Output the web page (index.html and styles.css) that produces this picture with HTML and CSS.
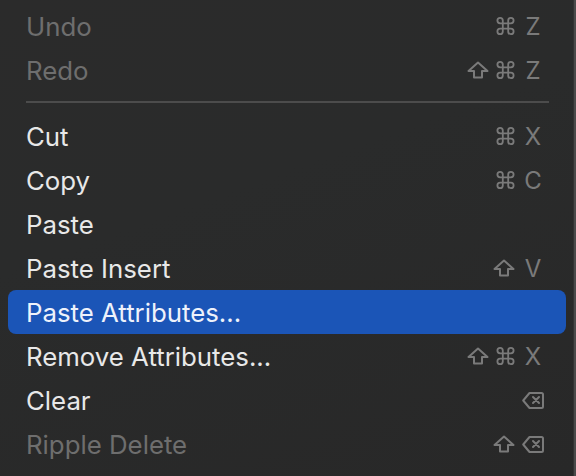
FILE: index.html
```html
<!DOCTYPE html>
<html>
<head>
<meta charset="utf-8">
<link rel="stylesheet" href="styles.css">
</head>
<body>
<svg width="0" height="0" class="defs">
  <defs>
    <symbol id="cmd" viewBox="2 2 20 20"><path d="M15 6v12a3 3 0 1 0 3-3H6a3 3 0 1 0 3 3V6a3 3 0 1 0-3 3h12a3 3 0 1 0-3-3" fill="none" stroke="currentColor" stroke-width="2" stroke-linejoin="round"/></symbol>
    <symbol id="shift" viewBox="0 0 22 18"><path d="M11 1.5 L20.5 10 H15 V16.5 H7 V10 H1.5 Z" fill="none" stroke="currentColor" stroke-width="2" stroke-linejoin="round"/></symbol>
    <symbol id="del" viewBox="0 0 22 17"><path d="M7.5 1 H19.5 A1.5 1.5 0 0 1 21 2.5 V14.5 A1.5 1.5 0 0 1 19.5 16 H7.5 L1.2 8.5 Z" fill="none" stroke="currentColor" stroke-width="2" stroke-linejoin="round"/><path d="M11 5 L17 11 M17 5 L11 11" stroke="currentColor" stroke-width="2" stroke-linecap="round"/></symbol>
  </defs>
</svg>
<div class="menu">
  <div class="item disabled"><span class="label">Undo</span><span class="keys"><svg class="ic cmd"><use href="#cmd"/></svg><span class="key">Z</span></span></div>
  <div class="item disabled"><span class="label">Redo</span><span class="keys"><svg class="ic shift"><use href="#shift"/></svg><svg class="ic cmd"><use href="#cmd"/></svg><span class="key">Z</span></span></div>
  <div class="sep"></div>
  <div class="item"><span class="label">Cut</span><span class="keys"><svg class="ic cmd"><use href="#cmd"/></svg><span class="key">X</span></span></div>
  <div class="item"><span class="label">Copy</span><span class="keys"><svg class="ic cmd"><use href="#cmd"/></svg><span class="key">C</span></span></div>
  <div class="item"><span class="label">Paste</span></div>
  <div class="item"><span class="label">Paste Insert</span><span class="keys"><svg class="ic shift"><use href="#shift"/></svg><span class="key">V</span></span></div>
  <div class="item selected"><span class="label">Paste Attributes...</span></div>
  <div class="item"><span class="label">Remove Attributes...</span><span class="keys"><svg class="ic shift"><use href="#shift"/></svg><svg class="ic cmd"><use href="#cmd"/></svg><span class="key">X</span></span></div>
  <div class="item"><span class="label">Clear</span><span class="keys"><svg class="ic del"><use href="#del"/></svg></span></div>
  <div class="item disabled"><span class="label">Ripple Delete</span><span class="keys"><svg class="ic shift"><use href="#shift"/></svg><svg class="ic del"><use href="#del"/></svg></span></div>
</div>
</body>
</html>
```

FILE: styles.css
```css
html, body {
  margin: 0;
  padding: 0;
  width: 576px;
  height: 476px;
  overflow: hidden;
  background: #282828;
}
.defs { position: absolute; }
.menu {
  box-sizing: border-box;
  width: 576px;
  height: 476px;
  padding-top: 4px;
  background: linear-gradient(160deg, #2b2b2b 0%, #2a2b2b 40%, #282828 100%);
  border-right: 2px solid #4a4a4a;
  box-shadow: inset -1px 0 0 #333;
  font-family: Inter, "Noto Sans", sans-serif;
}
.item {
  display: flex;
  align-items: center;
  justify-content: space-between;
  height: 44px;
  margin: 0 8px;
  padding: 0 22px 0 18px;
  border-radius: 8px;
  color: #e8e8e8;
  font-size: 25.8px;
}
.item.disabled { color: #6e6e6e; }
.item.selected {
  background: #1b55b7;
  color: #eef2fb;
}
.keys {
  display: flex;
  align-items: center;
  gap: 7px;
  color: #7a7a7a;
}
.key {
  width: 22px;
  text-align: center;
  font-size: 24px;
}
.ic { display: block; }
.ic.cmd { width: 19px; height: 18px; }
.ic.shift { width: 22px; height: 18px; }
.ic.del { width: 22px; height: 17px; }
.sep {
  height: 2px;
  margin: 9px 25px 11px 26px;
  background: #4c4c4c;
}
```
